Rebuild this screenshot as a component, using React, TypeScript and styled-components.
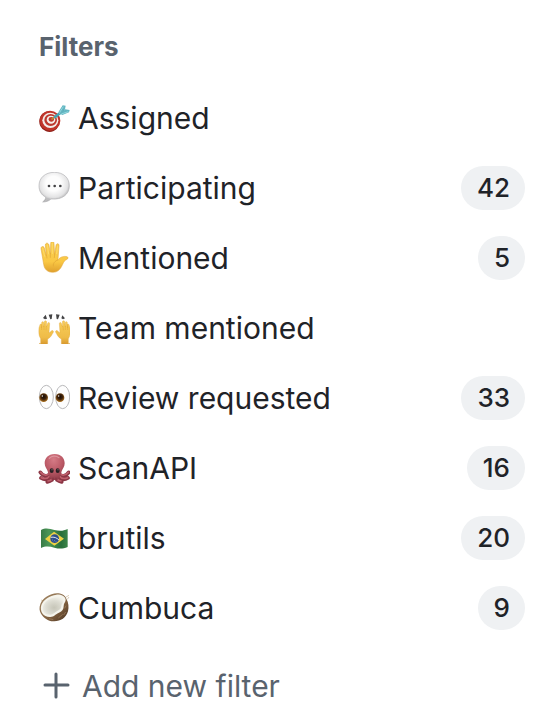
import React from "react";
import styled, { createGlobalStyle } from "styled-components";

const GlobalStyle = createGlobalStyle`
  * { box-sizing: border-box; }
  body {
    margin: 0;
    background: #ffffff;
    color: #1f2328;
    font-family: Inter, "Liberation Sans", sans-serif;
  }
`;

const Sidebar = styled.nav`
  padding: 28px 31px 0 38px;
`;

const Heading = styled.h2`
  margin: 0 0 18px;
  padding-left: 1px;
  color: #59636e;
  font-size: 26px;
  font-weight: 700;
  line-height: 37px;
`;

const FilterList = styled.ul`
  margin: 0;
  padding: 0;
  list-style: none;
`;

const FilterLink = styled.a`
  display: flex;
  align-items: center;
  height: 70px;
  gap: 8px;
  color: inherit;
  font-size: 30px;
  line-height: 40px;
  text-decoration: none;
`;

const Emoji = styled.svg`
  flex: none;
  width: 32px;
  height: 32px;
`;

const Label = styled.span`
  flex: 1;
  white-space: nowrap;
`;

const Counter = styled.span`
  padding: 0 15px 0 16px;
  border-radius: 22px;
  background: #eff1f3;
  font-size: 26px;
  font-weight: 500;
  line-height: 44px;
`;

const AddButton = styled.button`
  display: flex;
  align-items: center;
  gap: 12px;
  margin-top: 20px;
  padding: 0 0 0 4px;
  border: 0;
  background: none;
  color: #59636e;
  font: inherit;
  font-size: 30px;
  line-height: 46px;
  white-space: nowrap;
  cursor: pointer;
`;

const PlusIcon = styled.svg`
  flex: none;
  width: 28px;
  height: 28px;
`;

const Target = () => (
  <Emoji viewBox="24 21 96 96" aria-hidden="true">
    <ellipse cx="58" cy="80" rx="30" ry="31" fill="#8f2019" transform="rotate(-25 58 80)" />
    <ellipse cx="60" cy="77" rx="31" ry="30" fill="#c0352a" />
    <ellipse cx="61" cy="76" rx="24" ry="23" fill="#f3eeea" />
    <ellipse cx="62" cy="75" rx="19" ry="18" fill="#bd392e" />
    <ellipse cx="63" cy="74" rx="13" ry="12" fill="#f5efea" />
    <ellipse cx="64" cy="73" rx="8" ry="7" fill="#c03a2c" />
    <path d="M66 72 78 64" stroke="#b98b35" strokeWidth="5" strokeLinecap="round" />
    <path d="M75 66 92 53" stroke="#43a6b5" strokeWidth="8" strokeLinecap="round" />
    <path d="M85 52 98 31 107 32 105 43 119 45 117 52 97 60Z" fill="#62b6c2" />
    <path d="M88 56 105 43M89 52 100 35M94 57 115 50" stroke="#94d8df" strokeWidth="3" />
    <path d="M91 54 103 44" stroke="#368e9d" strokeWidth="2" />
  </Emoji>
);

const Speech = () => (
  <Emoji viewBox="24 24 96 96" aria-hidden="true">
    <defs>
      <radialGradient id="speech-shade" cx="48%" cy="38%" r="62%">
        <stop offset="0.4" stopColor="#fdfdfd" />
        <stop offset="0.75" stopColor="#e3e3e4" />
        <stop offset="1" stopColor="#a0a0a2" />
      </radialGradient>
    </defs>
    <path
      d="M73 25C45 25 27 42 27 65c0 16 7 28 20 34 0 7-4 11-9 15 10 0 19-3 25-9 34 3 55-14 55-40 0-23-17-40-45-40Z"
      fill="url(#speech-shade)" stroke="#b4b4b6" strokeWidth="2"
    />
    <path d="M48 101c0 5-3 9-7 12 7-1 14-4 19-9" fill="#bdbdbf" />
    <circle cx="57" cy="66" r="4" fill="#434345" />
    <circle cx="74" cy="66" r="4" fill="#434345" />
    <circle cx="91" cy="66" r="4" fill="#434345" />
  </Emoji>
);

const Hand = () => (
  <Emoji viewBox="24 24 96 96" aria-hidden="true">
    <defs>
      <linearGradient id="hand-shade" x1="0" y1="0" x2="0" y2="1">
        <stop offset="0" stopColor="#f8cd4e" />
        <stop offset="0.65" stopColor="#fac844" />
        <stop offset="1" stopColor="#dfa02e" />
      </linearGradient>
    </defs>
    <path
      d="M41 91 33 44c-1-7 8-9 10-2l6 22-3-30c-1-8 9-9 11-1l4 27 1-32c0-7 10-7 10 0l2 33 4-27c1-7 10-6 9 1l-3 42c8-9 17-11 27-9 4 1 4 6 0 8-7 3-10 8-13 15-7 16-15 24-30 24-14 0-25-8-27-24Z"
      fill="url(#hand-shade)" stroke="#dfa133" strokeWidth="1.5"
    />
    <path d="M49 64c1 3 2 5 2 8m10-12v10m13-9-1 10m11 7c-10 3-15 9-14 18" fill="none" stroke="#e0a535" strokeWidth="2" strokeLinecap="round" />
    <path d="m38 43 6 24m8-33 4 26m11-32v31m16-23-3 23" fill="none" stroke="#ffe178" strokeWidth="2" strokeLinecap="round" />
  </Emoji>
);

const raisedHand =
  "M32 119V104c-6-8-6-18-5-33l3-9c1-3 5-2 5 1l-1 9 1-16c0-4 6-4 6 0v13l2-16c0-4 7-3 7 1l-1 15 4-11c1-4 6-3 6 1l-2 28 7-6c3-3 8 0 6 4-4 7-8 16-17 20v14c-6 3-20 3-26-1Z";

const RaisedHands = () => (
  <Emoji viewBox="24 24 96 96" aria-hidden="true">
    <defs>
      <linearGradient id="raised-shade" x1="0" y1="0" x2="0" y2="1">
        <stop offset="0" stopColor="#f8cd58" />
        <stop offset="0.7" stopColor="#efbc48" />
        <stop offset="1" stopColor="#d7982f" />
      </linearGradient>
    </defs>
    <g fill="url(#raised-shade)" stroke="#dda238" strokeWidth="1">
      <path d={raisedHand} />
      <path d={raisedHand} transform="translate(147 0) scale(-1 1)" />
    </g>
    <path d="M35 67v11m7-12v12m7-11-1 12m51-12 1 12m6-13v12m7-11v11" stroke="#dfa437" strokeWidth="1.5" />
    <path d="m39 42 8-10 4 12-6 2Zm17-10 11-1-2 14-4 1Zm22-1 11 1-5 14-4-1Zm19 3 8 9-6 3-5-3Z" fill="#454547" />
  </Emoji>
);

const Eyes = () => (
  <Emoji viewBox="24 24 96 96" aria-hidden="true">
    <defs>
      <radialGradient id="iris-shade" cx="50%" cy="40%" r="60%">
        <stop offset="0" stopColor="#160d06" />
        <stop offset="0.5" stopColor="#3f220b" />
        <stop offset="1" stopColor="#b47823" />
      </radialGradient>
    </defs>
    <g fill="#fdfdfd" stroke="#b9b9bb" strokeWidth="3">
      <ellipse cx="49" cy="69" rx="21" ry="35" />
      <ellipse cx="98" cy="69" rx="21" ry="35" />
    </g>
    <circle cx="41" cy="71" r="13" fill="url(#iris-shade)" />
    <circle cx="90" cy="71" r="13" fill="url(#iris-shade)" />
    <circle cx="37" cy="66" r="2" fill="#ffffff" />
    <circle cx="86" cy="66" r="2" fill="#ffffff" />
  </Emoji>
);

const Octopus = () => (
  <Emoji viewBox="24 24 96 96" aria-hidden="true">
    <defs>
      <radialGradient id="octopus-shade" cx="45%" cy="22%" r="75%">
        <stop offset="0" stopColor="#d57b86" />
        <stop offset="0.6" stopColor="#bb5966" />
        <stop offset="1" stopColor="#933e4b" />
      </radialGradient>
    </defs>
    <g fill="none" strokeLinecap="round">
      <path d="M60 88c-6 12-21 9-29-3m30 12c-7 12-18 11-28 5m37-4c-2 11-9 14-18 16m35-26c6 12 21 9 29-3m-30 12c7 12 18 11 28 5m-37-4c2 11 9 14 18 16" stroke="#8c3645" strokeWidth="11" />
      <path d="M59 87c-7 9-20 8-27-2m27 11c-7 9-16 9-25 5m36-5c-2 10-8 14-16 15m34-24c7 9 20 8 27-2m-27 11c7 9 16 9 25 5m-36-5c2 10 8 14 16 15" stroke="#bf606d" strokeWidth="5" />
    </g>
    <path d="M74 30c-20 0-30 13-30 28 0 11 7 16 9 24 2 10 6 20 13 26h16c7-6 11-16 13-26 2-8 9-13 9-24 0-15-10-28-30-28Z" fill="url(#octopus-shade)" />
    <path d="M69 101v11m9-11v11" stroke="#843040" strokeWidth="3" />
    <ellipse cx="65" cy="80" rx="6" ry="7" fill="#2b2024" />
    <ellipse cx="83" cy="80" rx="6" ry="7" fill="#2b2024" />
    <circle cx="66" cy="77" r="1.5" fill="#c29da2" />
    <circle cx="84" cy="77" r="1.5" fill="#c29da2" />
    <path d="M58 43c7-8 20-9 29-2" fill="none" stroke="#dc959d" strokeWidth="4" strokeLinecap="round" />
  </Emoji>
);

const Flag = () => (
  <Emoji viewBox="24 24 96 96" aria-hidden="true">
    <defs>
      <linearGradient id="flag-shade">
        <stop offset="0" stopColor="#387a46" />
        <stop offset="0.3" stopColor="#4b9657" />
        <stop offset="0.75" stopColor="#286e3a" />
        <stop offset="1" stopColor="#3b8549" />
      </linearGradient>
    </defs>
    <path d="M33 48c15-8 27-3 40 0 14 3 26 4 40-3v54c-14 6-26 6-40 2-13-3-25-6-40 1Z" fill="url(#flag-shade)" />
    <path d="m45 75 27-22 30 21-29 21Z" fill="#ecd044" />
    <circle cx="74" cy="74" r="13" fill="#2c4d8b" />
    <path d="M62 70c10-2 18 1 25 8" fill="none" stroke="#dce6ef" strokeWidth="3" />
    <path d="M66 78h2m4 2h2m3 3h2m-8 1h1" stroke="#bccae2" strokeWidth="2" />
  </Emoji>
);

const Coconut = () => (
  <Emoji viewBox="24 24 96 96" aria-hidden="true">
    <defs>
      <linearGradient id="husk-shade" x1="0" y1="0" x2="1" y2="1">
        <stop offset="0" stopColor="#a68a68" />
        <stop offset="0.6" stopColor="#80603f" />
        <stop offset="1" stopColor="#4b3422" />
      </linearGradient>
      <radialGradient id="flesh-shade" cx="55%" cy="60%" r="60%">
        <stop offset="0" stopColor="#c6c5b8" />
        <stop offset="0.65" stopColor="#dddcd2" />
        <stop offset="1" stopColor="#efeee6" />
      </radialGradient>
    </defs>
    <path d="m108 39 9-5m-5 12 5-7M39 50l-6-2" stroke="#c9b594" strokeWidth="2" />
    <path d="M31 60c7-18 28-31 50-32 12 0 24 5 28 16 7 12 8 25 5 38-6 20-23 31-44 30-16-1-29-10-37-23-5-8-6-18-2-29Z" fill="url(#husk-shade)" />
    <path d="M34 63c6-16 25-29 45-31 14-1 26 4 28 14 1 7-6 12-6 20 0 9-4 17-14 20-10 4-14 12-26 13-20 1-33-16-27-36Z" fill="#f5f4ec" />
    <path d="M39 68c5-15 20-26 37-28 12-2 22 2 24 9 2 6-5 10-6 17 0 7-3 11-11 14-9 4-13 11-22 12-15 1-26-9-22-24Z" fill="url(#flesh-shade)" />
    <path d="m57 104 13 3m15-5 13-11m3 2 6-9m-3-11 4-8" fill="none" stroke="#a38462" strokeWidth="2" />
  </Emoji>
);

const filters: { label: string; icon: React.ReactNode; count?: number }[] = [
  { label: "Assigned", icon: <Target /> },
  { label: "Participating", icon: <Speech />, count: 42 },
  { label: "Mentioned", icon: <Hand />, count: 5 },
  { label: "Team mentioned", icon: <RaisedHands /> },
  { label: "Review requested", icon: <Eyes />, count: 33 },
  { label: "ScanAPI", icon: <Octopus />, count: 16 },
  { label: "brutils", icon: <Flag />, count: 20 },
  { label: "Cumbuca", icon: <Coconut />, count: 9 },
];

export default function App() {
  return (
    <>
      <GlobalStyle />
      <Sidebar aria-labelledby="filters-heading">
        <Heading id="filters-heading">Filters</Heading>
        <FilterList>
          {filters.map(({ label, icon, count }) => (
            <li key={label}>
              <FilterLink href="#">
                {icon}
                <Label>{label}</Label>
                {count !== undefined && <Counter>{count}</Counter>}
              </FilterLink>
            </li>
          ))}
        </FilterList>
        <AddButton type="button">
          <PlusIcon viewBox="0 0 28 28" aria-hidden="true">
            <path d="M14 2v23M3 13h23" fill="none" stroke="currentColor" strokeWidth="3" strokeLinecap="round" />
          </PlusIcon>
          Add new filter
        </AddButton>
      </Sidebar>
    </>
  );
}
